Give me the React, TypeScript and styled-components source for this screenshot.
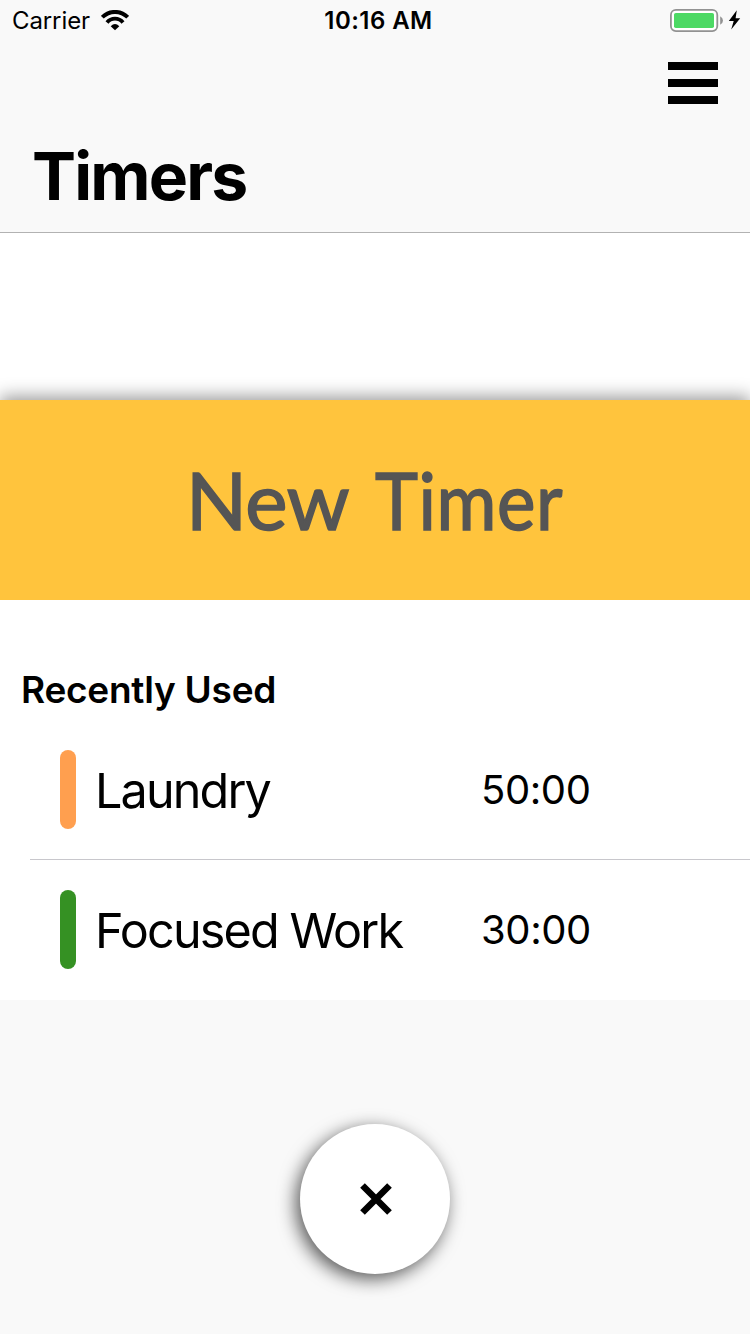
import React from "react";
import styled, { createGlobalStyle } from "styled-components";

const GlobalStyle = createGlobalStyle`
  * { box-sizing: border-box; }
  body { margin: 0; background: #f9f9f9; }
`;

const Screen = styled.div`
  width: 750px;
  height: 1334px;
  display: flex;
  flex-direction: column;
  background: #f9f9f9;
  color: #000;
  font-family: Inter, "Liberation Sans", sans-serif;
  overflow: hidden;
`;

const Label = styled.span<{ $size: number; $weight?: number; $spacing?: number }>`
  font-size: ${(p) => p.$size}px;
  font-weight: ${(p) => p.$weight ?? 400};
  letter-spacing: ${(p) => p.$spacing ?? 0}px;
  line-height: 1.2;
  white-space: nowrap;
`;

const StatusBar = styled.div`
  height: 42px;
  display: grid;
  grid-template-columns: 1fr auto 1fr;
  align-items: center;
  padding: 0 9px 0 12px;
`;

const StatusLeft = styled.div`
  display: flex;
  align-items: center;
  gap: 11px;
`;

const StatusRight = styled.div`
  display: flex;
  align-items: center;
  justify-content: flex-end;
`;

const Clock = styled(Label)`
  padding-left: 4px;
`;

const Header = styled.header`
  height: 233px;
  flex: none;
  display: flex;
  flex-direction: column;
  border-bottom: 1px solid #b2b2b2;
`;

const MenuButton = styled.button`
  align-self: flex-end;
  width: 50px;
  height: 42px;
  margin: 20px 32px 0 0;
  padding: 0;
  border: 0;
  background: none;
  display: flex;
  flex-direction: column;
  justify-content: space-between;
`;

const MenuLine = styled.span`
  width: 50px;
  height: 8px;
  background: #000;
`;

const Title = styled.h1`
  margin: 32px 0 0 32px;
  font-size: 66px;
  font-weight: 700;
  line-height: 80px;
  letter-spacing: -1.8px;
`;

const Content = styled.main`
  height: 767px;
  flex: none;
  padding-top: 167px;
  background: #fff;
`;

const Banner = styled.button`
  width: 100%;
  height: 200px;
  border: 0;
  padding: 0 0 2px 186px;
  text-align: left;
  background: #ffc43d;
  color: #555;
  font-family: Lato, "Open Sans", sans-serif;
  font-size: 80px;
  -webkit-text-stroke: 1.6px #555;
  box-shadow: 0 -4px 16px rgba(0, 0, 0, 0.38);
`;

const BannerWord = styled(Label)<{ $stretch?: number }>`
  display: inline-block;
  transform: scaleX(${(p) => p.$stretch ?? 1});
  transform-origin: left;

  & + & {
    margin-left: 5px;
  }
`;

const Recent = styled.section`
  height: 400px;
  background: #fff;
  position: relative;
`;

const SectionTitle = styled.h2`
  margin: 0;
  padding: 67px 0 0 21px;
  height: 120px;
  line-height: 46px;
  font-size: 37px;
  font-weight: 600;
  letter-spacing: -0.25px;
`;

const Row = styled.div`
  height: 140px;
  margin-left: 30px;
  padding: 0 0 1px 30px;
  display: grid;
  grid-template-columns: 16px 366px 1fr;
  align-items: center;
  column-gap: 19px;

  & + & {
    box-shadow: 0 -1px 0 #c8c7cc;
  }
`;

const TimerName = styled(Label)`
  padding-top: 4px;
`;

const Duration = styled(Label)`
  padding: 1px 0 0 1px;
`;

const Tag = styled.span<{ $color: string }>`
  height: 79px;
  border-radius: 8px;
  background: ${(p) => p.$color};
`;

const Footer = styled.footer`
  flex: 1;
  display: flex;
  justify-content: center;
  align-items: flex-start;
  padding-top: 124px;
`;

const CloseButton = styled.button`
  width: 150px;
  height: 150px;
  padding: 0 0 0 2px;
  border: 0;
  border-radius: 50%;
  background: #fff;
  display: flex;
  align-items: center;
  justify-content: center;
  box-shadow: -4px 5px 18px rgba(0, 0, 0, 0.65);
`;

const timers = [
  { name: "Laundry", time: "50:00", color: "#ff9f4f" },
  { name: "Focused Work", time: "30:00", color: "#359123" },
];

const WifiIcon = () => (
  <svg width="28" height="22" viewBox="0 0 28 22" fill="none">
    <path d="M1.3 7.2A17.9 17.9 0 0 1 26.7 7.2" stroke="#000" strokeWidth="4" />
    <path d="M6 12.5A10.2 10.2 0 0 1 22 12.5" stroke="#000" strokeWidth="3.8" />
    <path d="M14 20.3 9.7 16.2Q14 12 18.3 16.2Z" fill="#000" />
  </svg>
);

const BatteryIcon = () => (
  <svg width="71" height="24" viewBox="0 0 71 24">
    <rect x="0.9" y="0.9" width="46.4" height="21.2" rx="5" fill="#fff" stroke="#929292" strokeWidth="1.8" />
    <rect x="4" y="4" width="40" height="15" rx="1.8" fill="#4cd964" />
    <path d="M50.2 7.3Q53 9 53 11.5Q53 14 50.2 15.7Z" fill="#929292" />
    <path d="M66.8 1.2 58.8 12H63.7L61.2 20.6 70.2 9.2H65.6Z" fill="#000" />
  </svg>
);

const CloseIcon = () => (
  <svg width="34" height="34" viewBox="0 0 34 34" stroke="#000" strokeWidth="6.6">
    <path d="M3.5 3.5 30.5 30.5M30.5 3.5 3.5 30.5" />
  </svg>
);

export default function App() {
  return (
    <>
      <GlobalStyle />
      <Screen>
        <Header>
          <StatusBar>
            <StatusLeft>
              <Label $size={24} $spacing={-0.1}>Carrier</Label>
              <WifiIcon />
            </StatusLeft>
            <Clock $size={24} $weight={600} $spacing={0.45}>10:16 AM</Clock>
            <StatusRight>
              <BatteryIcon />
            </StatusRight>
          </StatusBar>
          <MenuButton aria-label="Menu">
            <MenuLine />
            <MenuLine />
            <MenuLine />
          </MenuButton>
          <Title>Timers</Title>
        </Header>
        <Content>
          <Banner>
            <BannerWord $size={80} $spacing={-0.5}>New</BannerWord>{" "}
            <BannerWord $size={80} $spacing={0.7} $stretch={0.91}>Timer</BannerWord>
          </Banner>
          <Recent>
            <SectionTitle>Recently Used</SectionTitle>
            {timers.map((t) => (
              <Row key={t.name}>
                <Tag $color={t.color} />
                <TimerName $size={48.5} $spacing={-1.85}>{t.name}</TimerName>
                <Duration $size={40} $spacing={-0.4}>{t.time}</Duration>
              </Row>
            ))}
          </Recent>
        </Content>
        <Footer>
          <CloseButton aria-label="Close">
            <CloseIcon />
          </CloseButton>
        </Footer>
      </Screen>
    </>
  );
}
